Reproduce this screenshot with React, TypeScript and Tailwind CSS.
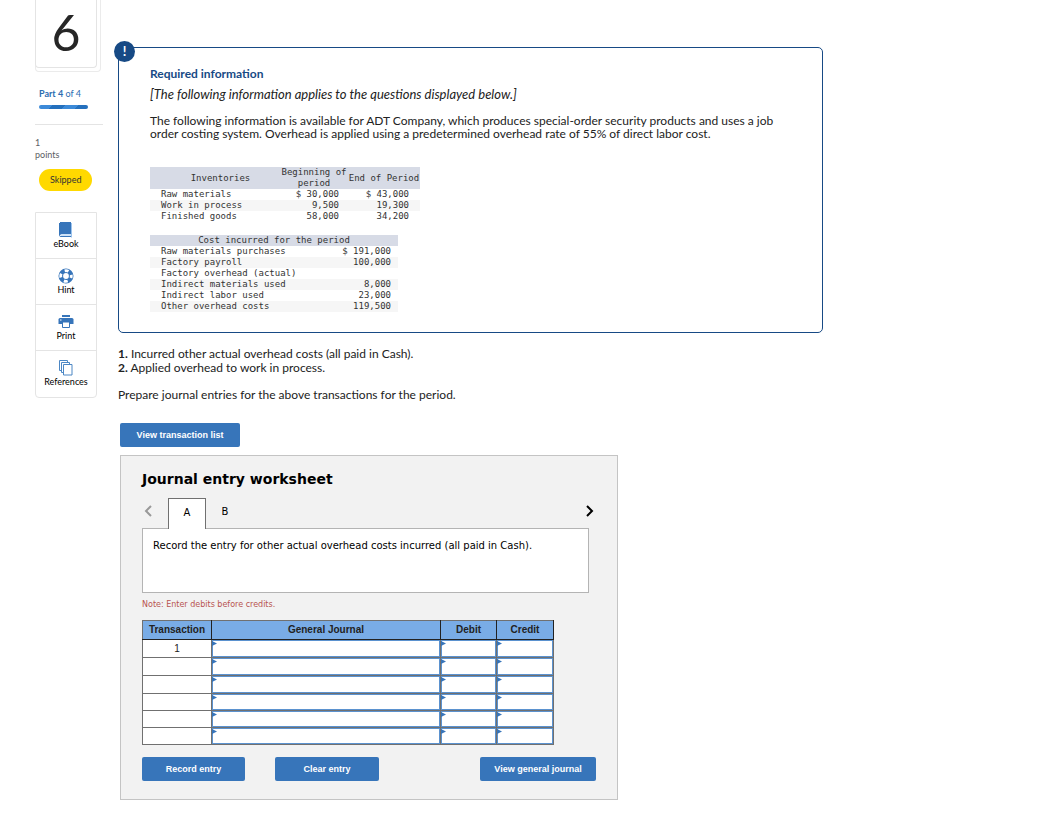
import { useState } from "react";
import type { ReactNode } from "react";

const inventories = [
  ["Raw materials", "$ 30,000", "$ 43,000"],
  ["Work in process", "9,500", "19,300"],
  ["Finished goods", "58,000", "34,200"],
];

const costs = [
  ["Raw materials purchases", "$ 191,000"],
  ["Factory payroll", "100,000"],
  ["Factory overhead (actual)", ""],
  ["Indirect materials used", "8,000"],
  ["Indirect labor used", "23,000"],
  ["Other overhead costs", "119,500"],
];

const journalRows = [1, 2, 3, 4, 5, 6];

function BookIcon() {
  return (
    <svg width="16" height="16" viewBox="0 0 16 16" aria-hidden="true">
      <path d="M2 0h11v12H3.500L2 13z" fill="#3775ba" />
      <path d="M13.500 1v14.500" stroke="#9cc4ee" />
      <path d="M1.500 1v12.500Q1.500 14.500 3 14.500h10" fill="none" stroke="#3775ba" />
      <path d="M3 13h10" stroke="#9cc4ee" />
    </svg>
  );
}

function HintIcon() {
  return (
    <svg width="16" height="16" viewBox="0 0 16 16" fill="none" aria-hidden="true">
      <circle cx="8" cy="8" r="5.200" stroke="#3775ba" strokeWidth="4.600" />
      <circle cx="8" cy="8" r="5.300" stroke="#fff" strokeWidth="2.800" strokeDasharray="4 4.325" strokeDashoffset="2" />
    </svg>
  );
}

function PrintIcon() {
  return (
    <svg width="16" height="16" viewBox="0 0 16 16" aria-hidden="true">
      <path d="M4 1h8v2H4z" fill="#3775ba" />
      <path d="M2 4h12q1.500 0 1.500 1.500V10H.5V5.500Q.5 4 2 4z" fill="#3775ba" />
      <path d="M4.500 8h7v5.500h-7z" fill="#fff" stroke="#3775ba" />
      <path d="M2 6h1.500" stroke="#fff" />
    </svg>
  );
}

function ReferencesIcon() {
  return (
    <svg width="16" height="16" viewBox="0 0 16 16" fill="#fff" stroke="#4c87c4" aria-hidden="true">
      <path d="M1.500 .5h8v10h-8z" />
      <path d="M3.500 2.500h8v10h-8z" />
      <path d="M5.500 4.500h8.500v10.500H5.500z" />
    </svg>
  );
}

const tools: { label: string; icon: ReactNode }[] = [
  { label: "eBook", icon: <BookIcon /> },
  { label: "Hint", icon: <HintIcon /> },
  { label: "Print", icon: <PrintIcon /> },
  { label: "References", icon: <ReferencesIcon /> },
];

function Sidebar() {
  return (
    <aside className="w-[68px] shrink-0 text-[9px] leading-3 text-[#5c6064]">
      <div className="mr-0.5 rounded-b border border-t-0 border-[#ebebeb] pr-[3px] pb-[3px]">
        <div className="-ml-px h-[68px] rounded-b border border-t-0 border-[#e4e4e4] bg-white pt-[7px] text-center text-[50px] leading-[50px] text-[#262626]">
          6
        </div>
      </div>
      <div className="px-1 pt-4 text-[#2b6cb0]">
        <b>Part 4</b> of 4
      </div>
      <div className="mt-[5px] ml-1 h-1 w-[49px] rounded-full bg-[linear-gradient(135deg,#3c8ad8_25%,#2470bd_25%,#2470bd_50%,#3c8ad8_50%,#3c8ad8_75%,#2470bd_75%)]" />
      <div className="mt-[15px] border-t border-[#e4e4e4] pt-3">
        1
        <br />
        points
      </div>
      <span className="mt-2 ml-1 inline-block rounded-full bg-[#ffd900] px-[11px] py-[5px] text-[#333]">Skipped</span>
      <nav className="mt-[21px] mr-[6px] rounded-b border border-[#e4e4e4]">
        {tools.map((tool) => (
          <button
            key={tool.label}
            className="flex h-[46px] w-full flex-col items-center border-b border-[#e4e4e4] pt-[9px] text-black last:border-b-0"
          >
            {tool.icon}
            <span>{tool.label}</span>
          </button>
        ))}
      </nav>
    </aside>
  );
}

function RequiredInformation() {
  return (
    <section className="relative rounded-[5px] border border-[#174a85] px-[31px] pt-[19px] pb-5">
      <span className="absolute -top-[7px] -left-[5px] flex size-[21px] items-center justify-center rounded-full bg-[#174a85] text-[13px] font-bold text-white">
        !
      </span>
      <h2 className="font-bold text-[#174a85]">Required information</h2>
      <p className="mt-2 text-[13px] italic">[The following information applies to the questions displayed below.]</p>
      <p className="mt-[13px]">
        The following information is available for ADT Company, which produces special-order security products and uses a
        job order costing system. Overhead is applied using a predetermined overhead rate of 55% of direct labor cost.
      </p>

      <table className="mt-[27px] w-[270px] table-fixed font-['DejaVu_Sans_Mono',monospace] text-[9px] leading-[11px] text-[#333]">
        <colgroup>
          <col className="w-[130px]" />
          <col className="w-[68px]" />
          <col />
        </colgroup>
        <thead className="bg-[#d7dbe6]">
          <tr>
            <th className="pl-[11px] font-normal">Inventories</th>
            <th className="font-normal">Beginning of period</th>
            <th className="font-normal whitespace-nowrap">End of Period</th>
          </tr>
        </thead>
        <tbody>
          {inventories.map(([name, begin, end]) => (
            <tr key={name} className="even:bg-[#f6f6f6]">
              <td className="pl-[11px]">{name}</td>
              <td className="pr-[9px] text-right">{begin}</td>
              <td className="pr-[11px] text-right">{end}</td>
            </tr>
          ))}
        </tbody>
      </table>

      <table className="mt-[13px] w-[248px] font-['DejaVu_Sans_Mono',monospace] text-[9px] leading-[11px] text-[#333]">
        <thead className="bg-[#d7dbe6]">
          <tr>
            <th colSpan={2} className="font-normal">Cost incurred for the period</th>
          </tr>
        </thead>
        <tbody>
          {costs.map(([name, amount]) => (
            <tr key={name} className="even:bg-[#f6f6f6]">
              <td className="pl-[11px]">{name}</td>
              <td className="pr-[7px] text-right">{amount}</td>
            </tr>
          ))}
        </tbody>
      </table>
    </section>
  );
}

function ActionButton({ children, className = "" }: { children: ReactNode; className?: string }) {
  return (
    <button
      className={`h-6 rounded-[2px] bg-[#3775ba] font-['Liberation_Sans',sans-serif] text-[9px] font-bold text-white ${className}`}
    >
      {children}
    </button>
  );
}

function Chevron({ d }: { d: string }) {
  return (
    <svg width="8" height="12" viewBox="0 0 8 12" fill="none" stroke="currentColor" strokeWidth="2" aria-hidden="true">
      <path d={d} />
    </svg>
  );
}

function EntryCell({ label, tall }: { label: string; tall: boolean }) {
  return (
    <td className="relative border border-[#707070] bg-white p-0">
      <input
        aria-label={label}
        className={`block w-full border border-[#5b92cf] bg-white px-2 outline-none ${tall ? "h-[17px]" : "h-4"}`}
      />
      <svg className="absolute top-px left-0" width="5" height="5" viewBox="0 0 5 5" aria-hidden="true">
        <path d="M0 0l5 2.500L0 5z" fill="#3775ba" />
      </svg>
    </td>
  );
}

function JournalTable() {
  return (
    <table className="mt-[9px] w-[412px] table-fixed border-collapse font-['Liberation_Sans',sans-serif] text-[10px] leading-[14px] text-[#222]">
      <colgroup>
        <col className="w-[69px]" />
        <col />
        <col className="w-[56px]" />
        <col className="w-[57px]" />
      </colgroup>
      <thead>
        <tr className="h-[19px] bg-[#79ace6]">
          <th className="border border-[#222] border-t-[#707070] border-l-[#707070] p-0">Transaction</th>
          <th className="border border-[#222] border-t-[#707070] p-0">General Journal</th>
          <th className="border border-[#222] border-t-[#707070] p-0">Debit</th>
          <th className="border border-[#222] border-t-[#707070] p-0">Credit</th>
        </tr>
      </thead>
      <tbody>
        {journalRows.map((row) => (
          <tr key={row}>
            <td className="border border-[#707070] bg-white p-0 text-center">{row === 1 ? "1" : ""}</td>
            <EntryCell label={`General journal, line ${row}`} tall={row <= 3} />
            <EntryCell label={`Debit, line ${row}`} tall={row <= 3} />
            <EntryCell label={`Credit, line ${row}`} tall={row <= 3} />
          </tr>
        ))}
      </tbody>
    </table>
  );
}

function Worksheet() {
  const [tab, setTab] = useState("A");

  return (
    <section className="mt-2 ml-0.5 max-w-[498px] border border-[#c4c4c4] bg-[#f2f2f2] px-[21px] pt-[13px] pb-[18px] font-['DejaVu_Sans',Verdana,sans-serif] text-[10px] text-black">
      <h2 className="text-[14px] leading-5 font-bold">Journal entry worksheet</h2>
      <div className="mt-[9px] flex h-[30px] items-center">
        <button aria-label="Previous" className="mr-4 ml-0.5 pb-1 text-[#999]" onClick={() => setTab("A")}>
          <Chevron d="M7 1L2 6l5 5" />
        </button>
        {["A", "B"].map((name) => (
          <button
            key={name}
            onClick={() => setTab(name)}
            className={
              tab === name
                ? "z-10 -mb-px h-[31px] w-[38px] border border-b-0 border-[#707070] bg-white pb-1"
                : "h-[30px] w-[38px] pb-1"
            }
          >
            {name}
          </button>
        ))}
        <button aria-label="Next" className="mr-0.5 ml-auto pb-1" onClick={() => setTab("B")}>
          <Chevron d="M1 1l5 5-5 5" />
        </button>
      </div>
      <div className="mr-[7px] h-[65px] border border-[#b4b4b4] bg-white px-[10px] py-[10px] leading-[14px]">
        Record the entry for other actual overhead costs incurred (all paid in Cash).
      </div>
      <p className="mt-[6px] text-[8px] leading-3 text-[#b85450]">Note: Enter debits before credits.</p>
      <JournalTable />
      <div className="mt-3 flex">
        <ActionButton className="w-[103px]">Record entry</ActionButton>
        <ActionButton className="ml-[30px] w-[104px]">Clear entry</ActionButton>
        <ActionButton className="ml-auto w-[116px]">View general journal</ActionButton>
      </div>
    </section>
  );
}

export default function App() {
  return (
    <div className="flex min-h-screen gap-[15px] bg-white pr-4 pb-7 pl-[35px] font-['Lato',sans-serif] text-[12px] leading-[13px] text-[#222]">
      <Sidebar />
      <main className="max-w-[705px] flex-1 pt-[47px]">
        <RequiredInformation />
        <div className="mt-[14px] leading-[14px]">
          <p>
            <b>1.</b> Incurred other actual overhead costs (all paid in Cash).
          </p>
          <p>
            <b>2.</b> Applied overhead to work in process.
          </p>
          <p className="mt-[13px]">Prepare journal entries for the above transactions for the period.</p>
        </div>
        <ActionButton className="mt-[21px] ml-0.5 w-[120px]">View transaction list</ActionButton>
        <Worksheet />
      </main>
    </div>
  );
}
